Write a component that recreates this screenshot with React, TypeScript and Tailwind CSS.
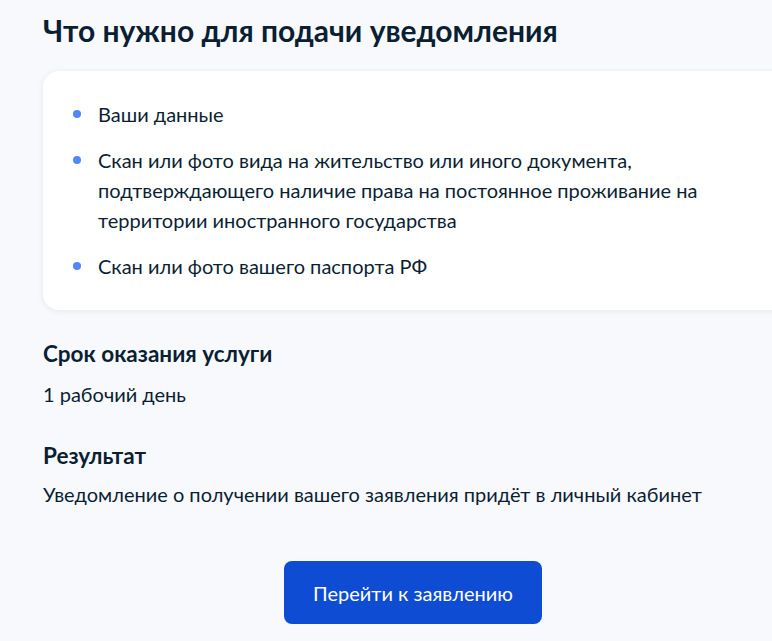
const items = [
  "Ваши данные",
  "Скан или фото вида на жительство или иного документа, подтверждающего наличие права на постоянное проживание на территории иностранного государства",
  "Скан или фото вашего паспорта РФ",
]

function App() {
  return (
    <div
      className="h-[641px] w-[772px] overflow-hidden bg-[#f8f9fd] text-[#0b1f33]"
      style={{ fontFamily: "Lato, 'Noto Sans', sans-serif" }}
    >
      <div className="pl-[43px]">
        <h1 className="pt-[12px] text-[30px] font-bold leading-[36px]">Что нужно для подачи уведомления</h1>

        <div className="mt-[23px] w-[760px] rounded-[16px] bg-white pt-[28px] pb-[29px] pl-[30px] shadow-[0_1px_6px_rgba(11,31,51,0.08)]">
          <ul className="flex flex-col gap-[16px]">
            {items.map((item) => (
              <li key={item} className="flex items-start">
                <span className="mt-[11px] h-[8px] w-[8px] shrink-0 rounded-full bg-[#5287f6]" />
                <span className="ml-[17px] w-[620px] text-[20px] leading-[30px]">{item}</span>
              </li>
            ))}
          </ul>
        </div>

        <h2 className="mt-[30px] text-[22.5px] font-bold leading-[28px]">Срок оказания услуги</h2>
        <p className="mt-[13px] text-[20px] leading-[26px]">1 рабочий день</p>

        <h2 className="mt-[35px] text-[22.5px] font-bold leading-[28px]">Результат</h2>
        <p className="mt-[11px] text-[20px] leading-[26px]">Уведомление о получении вашего заявления придёт в личный кабинет</p>
      </div>

      <div className="mt-[54px] flex justify-center">
        <button className="ml-[54px] h-[63px] w-[258px] rounded-[8px] bg-[#0d4cd3] text-[20px] text-white">
          Перейти к заявлению
        </button>
      </div>
    </div>
  )
}

export default App
